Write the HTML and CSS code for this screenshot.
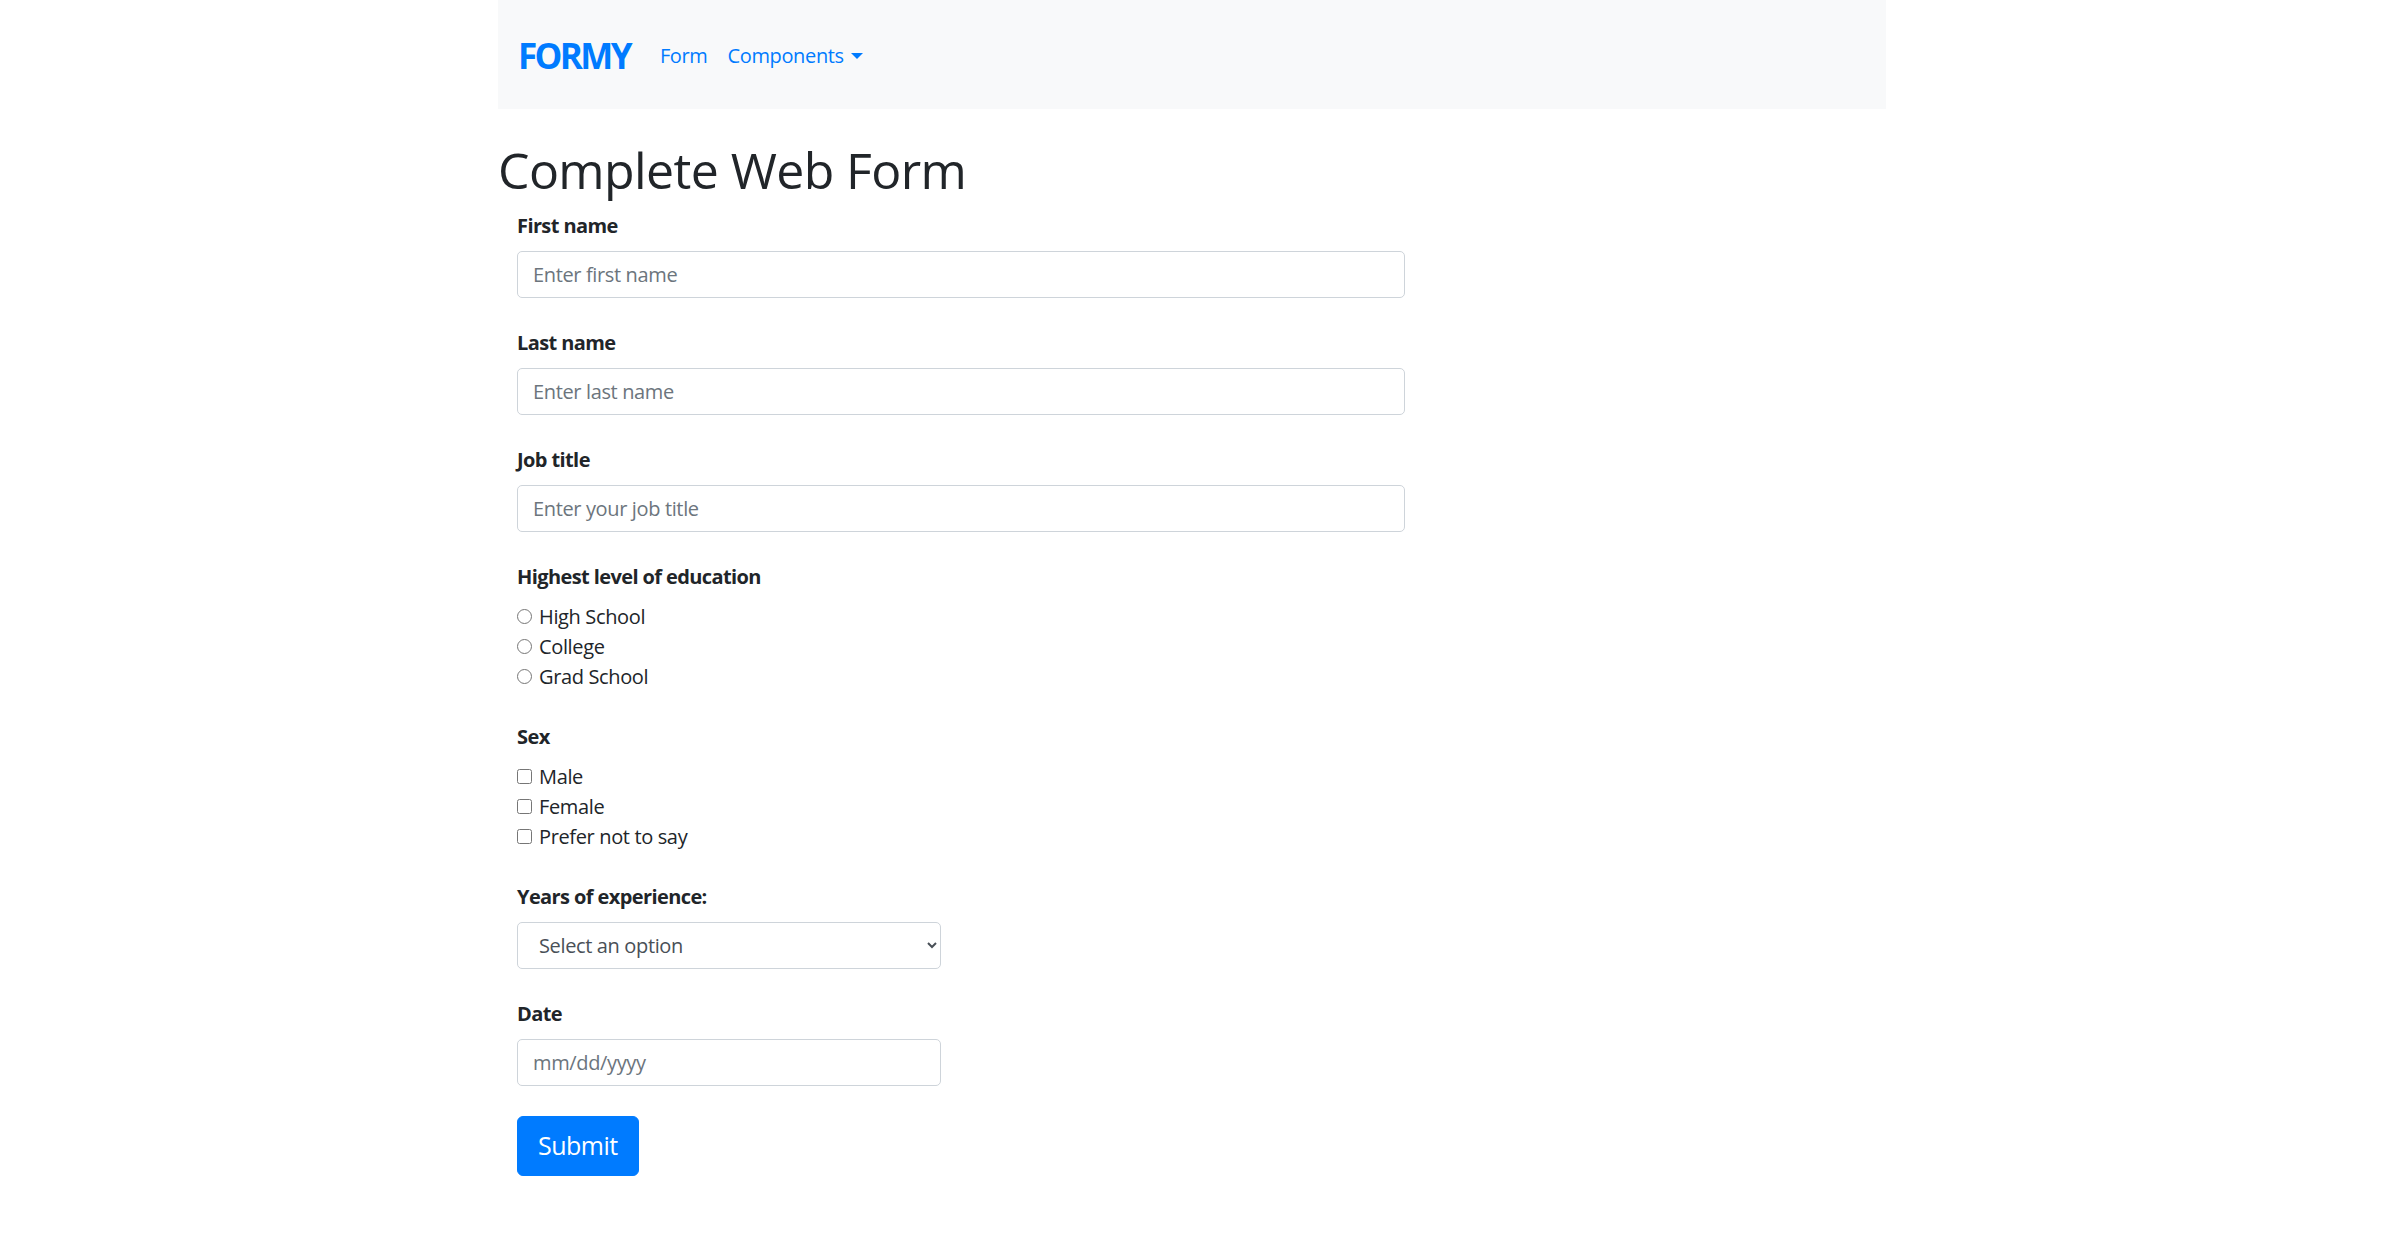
FILE: index.html
```html
<!DOCTYPE html>
<html lang="en">
<head>
<meta charset="utf-8">
<title>Formy - Complete Web Form</title>
<link rel="stylesheet" href="styles.css">
</head>
<body>
<div class="container">
  <nav class="navbar">
    <a class="brand" href="#">FORMY</a>
    <ul class="nav">
      <li><a class="nav-link" href="#">Form</a></li>
      <li><a class="nav-link" href="#">Components<span class="caret"></span></a></li>
    </ul>
  </nav>

  <h1 class="title">Complete Web Form</h1>

  <form class="form">
    <div class="group">
      <label class="label" for="first-name">First name</label>
      <input class="control" type="text" id="first-name" placeholder="Enter first name">
    </div>
    <div class="group">
      <label class="label" for="last-name">Last name</label>
      <input class="control" type="text" id="last-name" placeholder="Enter last name">
    </div>
    <div class="group">
      <label class="label" for="job-title">Job title</label>
      <input class="control" type="text" id="job-title" placeholder="Enter your job title">
    </div>
    <div class="group">
      <label class="label">Highest level of education</label>
      <div class="option"><input class="check" type="radio" name="edu" id="r1"><label for="r1">High School</label></div>
      <div class="option"><input class="check" type="radio" name="edu" id="r2"><label for="r2">College</label></div>
      <div class="option"><input class="check" type="radio" name="edu" id="r3"><label for="r3">Grad School</label></div>
    </div>
    <div class="group">
      <label class="label">Sex</label>
      <div class="option"><input class="check" type="checkbox" id="c1"><label for="c1">Male</label></div>
      <div class="option"><input class="check" type="checkbox" id="c2"><label for="c2">Female</label></div>
      <div class="option"><input class="check" type="checkbox" id="c3"><label for="c3">Prefer not to say</label></div>
    </div>
    <div class="group">
      <label class="label" for="years">Years of experience:</label>
      <select class="control narrow select" id="years">
        <option>Select an option</option>
        <option>0-1</option>
        <option>2-4</option>
        <option>5-9</option>
        <option>10+</option>
      </select>
    </div>
    <div class="group">
      <label class="label" for="date">Date</label>
      <input class="control narrow" type="text" id="date" placeholder="mm/dd/yyyy">
    </div>
    <a class="btn" href="#">Submit</a>
  </form>
</div>
</body>
</html>
```

FILE: styles.css
```css
* { box-sizing: border-box; }

html, body {
  margin: 0;
  padding: 0;
  background: #fff;
}

body {
  font-family: "Open Sans", "Noto Sans", sans-serif;
  font-size: 20px;
  line-height: 1.5;
  color: #212529;
  letter-spacing: -0.018em;
}

.container {
  width: 1424px;
  margin: 0 auto;
  padding: 0 18px;
}

.navbar {
  height: 109px;
  background: #f8f9fa;
  display: flex;
  align-items: center;
  padding: 0 20px;
}

.brand {
  font-size: 35px;
  font-weight: 700;
  color: #007bff;
  text-decoration: none;
  margin-right: 20px;
  letter-spacing: -0.075em;
  line-height: 1;
  padding-top: 2px;
}

.nav {
  display: flex;
  list-style: none;
  margin: 0;
  padding: 0;
}

.nav-link {
  display: block;
  padding: 2px 10px 0;
  color: #007bff;
  text-decoration: none;
  font-size: 20px;
}

.caret {
  display: inline-block;
  margin-left: 7px;
  vertical-align: 4px;
  border-top: 6px solid #007bff;
  border-left: 6px solid transparent;
  border-right: 6px solid transparent;
}

.title {
  margin: 31px 0 11px;
  font-size: 50px;
  font-weight: 500;
  line-height: 1.2;
  color: #212529;
  letter-spacing: -0.012em;
}

.form {
  width: 907px;
  padding-left: 19px;
}

.group {
  margin-bottom: 30px;
}

.label {
  display: block;
  font-weight: 700;
  margin-bottom: 10px;
  line-height: 30px;
  letter-spacing: -0.03em;
}

.control {
  display: block;
  width: 100%;
  height: 47px;
  padding: 0 15px;
  font-family: inherit;
  font-size: 20px;
  letter-spacing: -0.018em;
  color: #495057;
  background: #fff;
  border: 1px solid #ced4da;
  border-radius: 5px;
  outline: none;
}

.control::placeholder {
  color: #6c757d;
  opacity: 1;
}

.narrow {
  width: 424px;
}

.select {
  padding: 0 11px 0 17px;
}

.option {
  display: flex;
  align-items: flex-start;
  height: 30px;
}

.check {
  width: 15px;
  height: 15px;
  margin: 7px 7px 0 0;
  flex: none;
}

.btn {
  display: inline-block;
  padding: 10px 20px;
  font-size: 25px;
  line-height: 37.5px;
  color: #fff;
  background: #007bff;
  border: 1px solid #007bff;
  border-radius: 6px;
  text-decoration: none;
  letter-spacing: -0.02em;
}
```
